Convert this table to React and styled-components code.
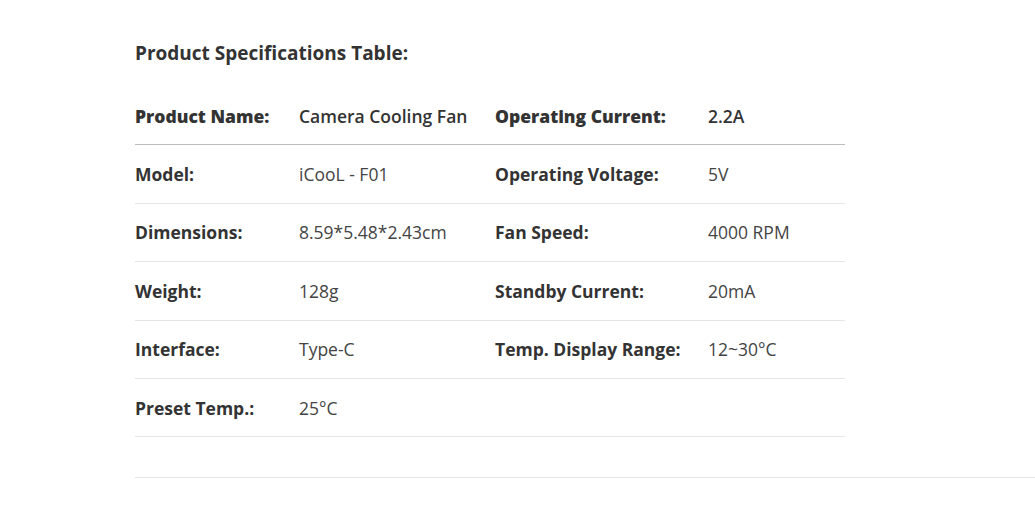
import React from "react";
import styled, { createGlobalStyle } from "styled-components";

const GlobalStyle = createGlobalStyle`
  html, body {
    margin: 0;
    padding: 0;
    background: #ffffff;
  }
  body {
    font-family: "Open Sans", "Noto Sans", "Liberation Sans", sans-serif;
    color: #333333;
  }
`;

const Page = styled.div`
  padding: 38px 0 0 135px;
  width: 1035px;
  box-sizing: border-box;
  overflow: hidden;
`;

const Title = styled.h3`
  margin: 0 0 19px;
  font-size: 19px;
  font-weight: 700;
  line-height: 30px;
  color: #333333;
`;

const SpecTable = styled.table`
  border-collapse: collapse;
  width: 710px;
`;

const HeadRow = styled.tr`
  border-bottom: 1px solid #bdbdbd;
`;

const BodyRow = styled.tr`
  border-bottom: 1px solid #e6e6e6;
`;

const Cell = styled.td`
  height: 57.4px;
  padding: 0;
  text-align: left;
  vertical-align: middle;
  font-size: 17.5px;
  line-height: 22px;
  white-space: nowrap;
  width: ${({ $width }) => $width}px;
  font-weight: ${({ $label, $head }) =>
    $label ? ($head ? 800 : 700) : $head ? 600 : 400};
  color: ${({ $label, $head }) => ($label || $head ? "#333333" : "#444444")};
`;

const Divider = styled.div`
  margin-top: 40px;
  height: 1px;
  background: #e6e6e6;
  width: 100%;
`;

const widths = [164, 196, 213, 137];

const rows = [
  ["Product Name:", "Camera Cooling Fan", "Operating Current:", "2.2A"],
  ["Model:", "iCooL - F01", "Operating Voltage:", "5V"],
  ["Dimensions:", "8.59*5.48*2.43cm", "Fan Speed:", "4000 RPM"],
  ["Weight:", "128g", "Standby Current:", "20mA"],
  ["Interface:", "Type-C", "Temp. Display Range:", "12~30°C"],
  ["Preset Temp.:", "25°C", "", ""],
];

const App = () => {
  const [head, ...body] = rows;
  return (
    <>
      <GlobalStyle />
      <Page>
        <Title>Product Specifications Table:</Title>
        <SpecTable>
          <thead>
            <HeadRow>
              {head.map((text, i) => (
                <Cell as="th" key={i} $head $label={i % 2 === 0} $width={widths[i]}>
                  {text}
                </Cell>
              ))}
            </HeadRow>
          </thead>
          <tbody>
            {body.map((row, r) => (
              <BodyRow key={r}>
                {row.map((text, i) => (
                  <Cell key={i} $label={i % 2 === 0} $width={widths[i]}>
                    {text}
                  </Cell>
                ))}
              </BodyRow>
            ))}
          </tbody>
        </SpecTable>
        <Divider />
      </Page>
    </>
  );
};

export default App;
